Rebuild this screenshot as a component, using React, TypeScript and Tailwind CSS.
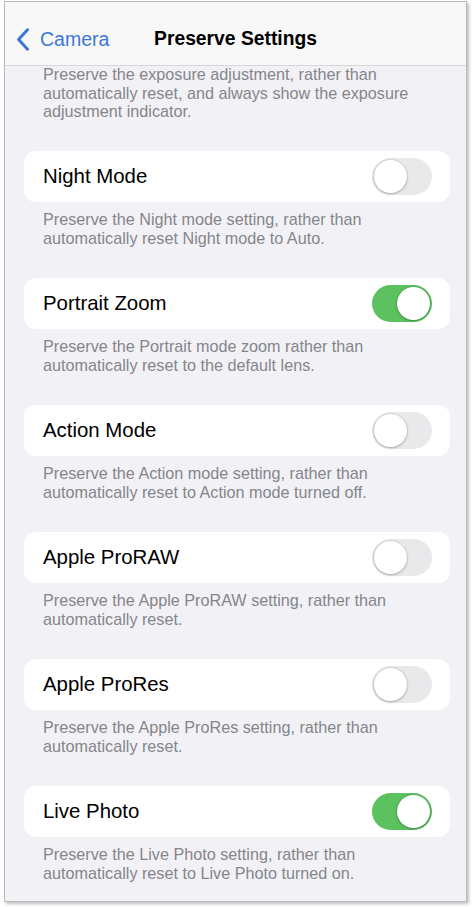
import React, { useState } from 'react';

const font = { fontFamily: '"Liberation Sans", Arial, sans-serif' };

type Item = { label: string; desc: string; on: boolean };

const items: Item[] = [
  { label: 'Night Mode', desc: 'Preserve the Night mode setting, rather than automatically reset Night mode to Auto.', on: false },
  { label: 'Portrait Zoom', desc: 'Preserve the Portrait mode zoom rather than automatically reset to the default lens.', on: true },
  { label: 'Action Mode', desc: 'Preserve the Action mode setting, rather than automatically reset to Action mode turned off.', on: false },
  { label: 'Apple ProRAW', desc: 'Preserve the Apple ProRAW setting, rather than automatically reset.', on: false },
  { label: 'Apple ProRes', desc: 'Preserve the Apple ProRes setting, rather than automatically reset.', on: false },
  { label: 'Live Photo', desc: 'Preserve the Live Photo setting, rather than automatically reset to Live Photo turned on.', on: true },
];

const Toggle = ({ on, onClick }: { on: boolean; onClick: () => void }) => (
  <button
    onClick={onClick}
    className={`flex h-[37px] w-[60px] shrink-0 items-center rounded-full p-[2px] ${
      on ? 'justify-end bg-[#5cc15f]' : 'justify-start bg-[#e9e9eb]'
    }`}
  >
    <span className="block h-[33px] w-[33px] rounded-full bg-white shadow-[0_1px_3px_rgba(0,0,0,0.25)] ring-1 ring-black/5" />
  </button>
);

export default function App() {
  const [state, setState] = useState(items.map((i) => i.on));

  return (
    <div className="min-h-[907px] bg-white pl-[4px] pt-[1px]" style={font}>
      <div className="flex h-[901px] w-[463px] flex-col overflow-hidden border border-[#b9b9b9] bg-[#f2f2f6] shadow-[2px_2px_3px_rgba(0,0,0,0.25)]">
        {/* Nav bar */}
        <div className="grid h-[64px] shrink-0 grid-cols-[1fr_auto_1fr] items-center border-b border-[#d6d6d8] bg-[#f8f8f8] pt-[12px]">
          <div className="flex items-center pl-[11px] text-[19.5px] text-[#3b78d6]">
            <svg width="14" height="23" viewBox="0 0 14 23" className="mr-[10px]">
              <path d="M11.5 1.8 L2.6 11.5 L11.5 21.2" fill="none" stroke="#3b78d6" strokeWidth="3" strokeLinecap="round" strokeLinejoin="round" />
            </svg>
            <span>Camera</span>
          </div>
          <div className="text-[19.3px] font-bold text-black">Preserve Settings</div>
          <div />
        </div>

        <div className="flex flex-col pl-[19px] pr-[16px]">
          <p className="-mt-[1px] px-[19px] text-[16.2px] leading-[18.7px] text-[#85858a]">
            Preserve the exposure adjustment, rather than automatically reset, and always show the exposure adjustment indicator.
          </p>

          {items.map((item, i) => (
            <div key={item.label} className="mt-[30px] flex flex-col">
              <div className="flex h-[51px] items-center justify-between rounded-[12px] bg-white pl-[19px] pr-[18px]">
                <span className="text-[20.4px] text-black">{item.label}</span>
                <Toggle
                  on={state[i]}
                  onClick={() => setState((s) => s.map((v, j) => (j === i ? !v : v)))}
                />
              </div>
              <p className="px-[19px] pt-[8px] text-[16.2px] leading-[19px] text-[#85858a]">{item.desc}</p>
            </div>
          ))}
        </div>
      </div>
    </div>
  );
}
